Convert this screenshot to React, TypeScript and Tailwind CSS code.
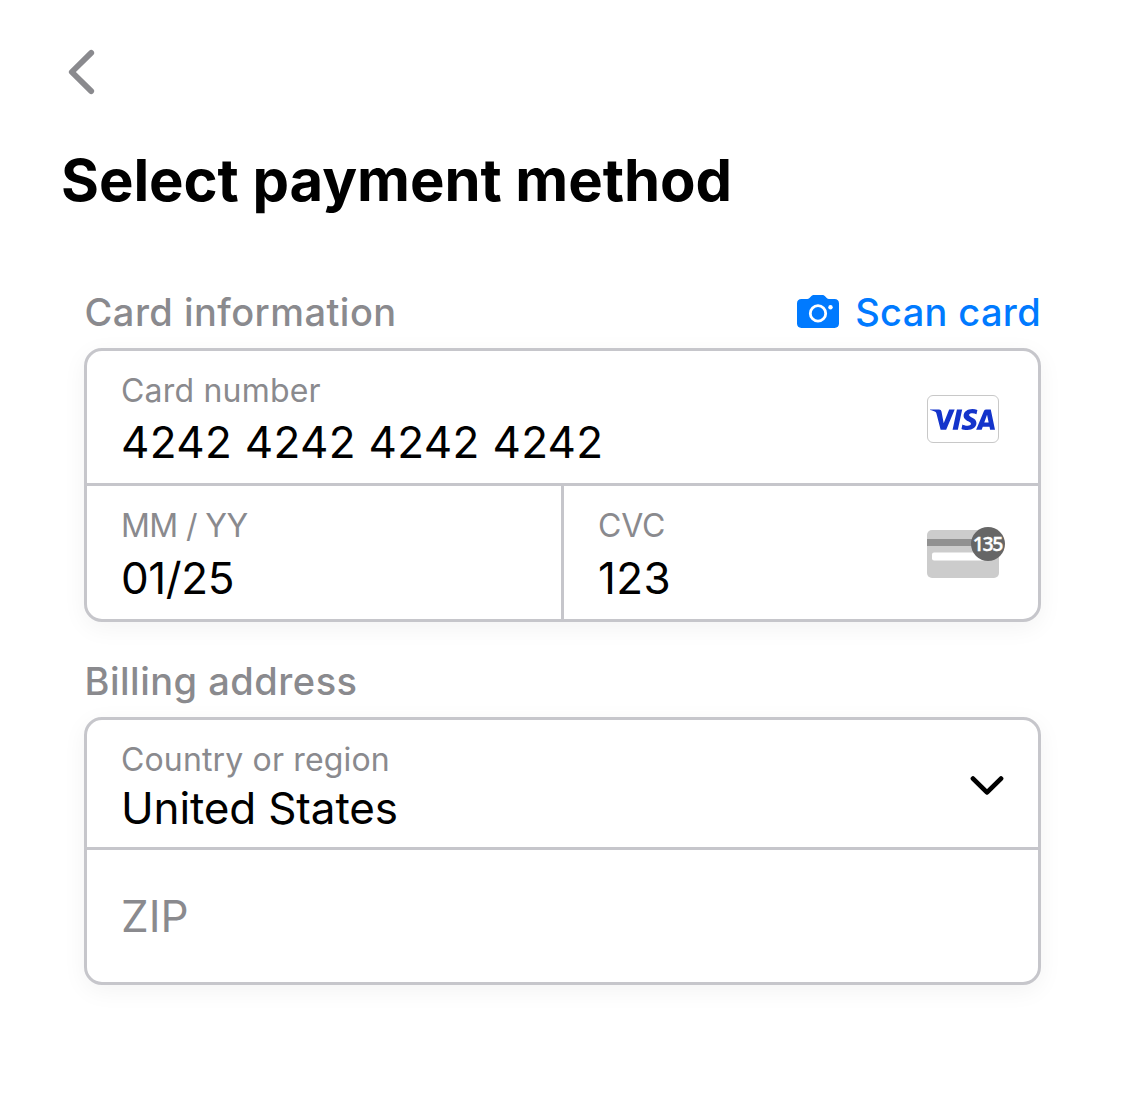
import { SiVisa } from "react-icons/si";

function BackIcon() {
  return (
    <svg width="28" height="46" viewBox="0 0 28 46" fill="none">
      <path d="M24.2 3.9 4.8 23l19.4 19.1" stroke="#8a8a8e" strokeWidth="5.8" strokeLinecap="round" strokeLinejoin="round" />
    </svg>
  );
}

function CameraIcon() {
  return (
    <svg width="42" height="33" viewBox="0 0 42 33" fill="none">
      <path
        d="M4.5 4H10.4C11.6 4 12.3 3.5 13 2.6L13.7 1.8C14.6.6 15.6 0 17 0H25.2C26.6 0 27.6.6 28.5 1.8L29.2 2.6C29.9 3.5 30.6 4 31.8 4H37.5C40.4 4 42 5.6 42 8.4V28.6C42 31.4 40.4 33 37.5 33H4.5C1.6 33 0 31.4 0 28.6V8.4C0 5.6 1.6 4 4.5 4Z"
        fill="#007aff"
      />
      <circle cx="21" cy="18.4" r="7.7" stroke="white" strokeWidth="2.8" />
      <circle cx="33.5" cy="12.3" r="2.2" fill="white" />
    </svg>
  );
}

function CvcIcon() {
  return (
    <svg width="78" height="52" viewBox="0 0 78 52" fill="none">
      <rect y="3" width="72" height="48" rx="5" fill="#cccccc" />
      <rect y="12" width="72" height="7" fill="#919191" />
      <rect x="5" y="25.5" width="60" height="8" rx="2" fill="white" />
      <circle cx="61" cy="17" r="17" fill="#666666" />
      <text x="45.8" y="24.2" fill="white" stroke="white" strokeWidth="0.3" fontFamily="'Open Sans'" fontSize="19.5" fontWeight="600" letterSpacing="-1.4">
        135
      </text>
    </svg>
  );
}

function ChevronDown() {
  return (
    <svg width="34" height="20" viewBox="0 0 34 20" fill="none">
      <path d="M3 2.6 17 16.4 31 2.6" stroke="black" strokeWidth="4.8" strokeLinecap="round" strokeLinejoin="round" />
    </svg>
  );
}

const box =
  "flex flex-col rounded-[18px] border-3 border-[#c6c6cb] bg-white shadow-[0_6px_24px_rgba(0,0,0,0.05)]";
const label = "text-[32px] leading-[40px] text-[#8a8a8e]";
const value = "text-[44px] leading-[56px] text-black";
const section = "pl-[0.5px] text-[38px] font-medium leading-[48px] text-[#8a8a8e]";

export default function App() {
  return (
    <main className="flex h-[1109px] w-[1125px] flex-col bg-white font-['Inter',sans-serif]">
      <header className="flex h-[144px] items-start pl-[67px] pt-[49px]">
        <button type="button" aria-label="Back">
          <BackIcon />
        </button>
      </header>
      <h1 className="pl-[61px] text-[58px] font-bold leading-[72px] tracking-[-0.06px] text-black">Select payment method</h1>

      <div className="mt-[72px] flex flex-col px-[84px]">
        <div className="flex h-12 items-center justify-between">
          <h2 className={`${section} tracking-[0.47px]`}>Card information</h2>
          <button type="button" className="flex items-center gap-4">
            <span className="mb-[2px]">
              <CameraIcon />
            </span>
            <span className="text-[38px] font-medium leading-[48px] tracking-[0.34px] text-[#007aff]">Scan card</span>
          </button>
        </div>

        <div className={`${box} mt-3 h-[274px]`}>
          <div className="flex h-[135px] justify-between border-b-3 border-[#c6c6cb] pl-[34px] pr-[39px] pt-5">
            <div className="flex flex-col gap-[3px]">
              <span className={`${label} tracking-[0.2px]`}>Card number</span>
              <span className={`${value} tracking-[0.32px]`}>4242 4242 4242 4242</span>
            </div>
            <span className="mt-6 flex h-12 w-[72px] items-center justify-center rounded-[6px] border border-[#c8c8c8] bg-white pr-[2px] pt-px">
              <SiVisa size={65} color="#1434cb" />
            </span>
          </div>
          <div className="flex h-[133px]">
            <div className="flex w-[477px] flex-col gap-1 border-r-3 border-[#c6c6cb] pl-[34px] pt-5">
              <span className={`${label} tracking-[-0.6px]`}>MM / YY</span>
              <span className={`${value} tracking-[-0.4px]`}>01/25</span>
            </div>
            <div className="flex flex-1 justify-between pl-[34px] pr-[33px] pt-5">
              <div className="flex flex-col gap-1">
                <span className={`${label} tracking-[-0.2px]`}>CVC</span>
                <span className={`${value} tracking-[0.4px]`}>123</span>
              </div>
              <div className="mt-[21px]">
                <CvcIcon />
              </div>
            </div>
          </div>
        </div>

        <h2 className={`${section} mt-[35px] tracking-[0.5px]`}>Billing address</h2>

        <div className={`${box} mt-3 h-[268px]`}>
          <div className="flex h-[130px] justify-between border-b-3 border-[#c6c6cb] pl-[34px] pr-[34px] pt-5">
            <div className="flex flex-col">
              <span className={`${label} tracking-[0.15px]`}>Country or region</span>
              <span className={`${value} tracking-[-0.15px]`}>United States</span>
            </div>
            <div className="mt-9">
              <ChevronDown />
            </div>
          </div>
          <div className="flex h-[132px] items-center pl-[34px]">
            <span className="text-[44px] leading-[56px] text-[#8a8a8e]">ZIP</span>
          </div>
        </div>
      </div>
    </main>
  );
}
